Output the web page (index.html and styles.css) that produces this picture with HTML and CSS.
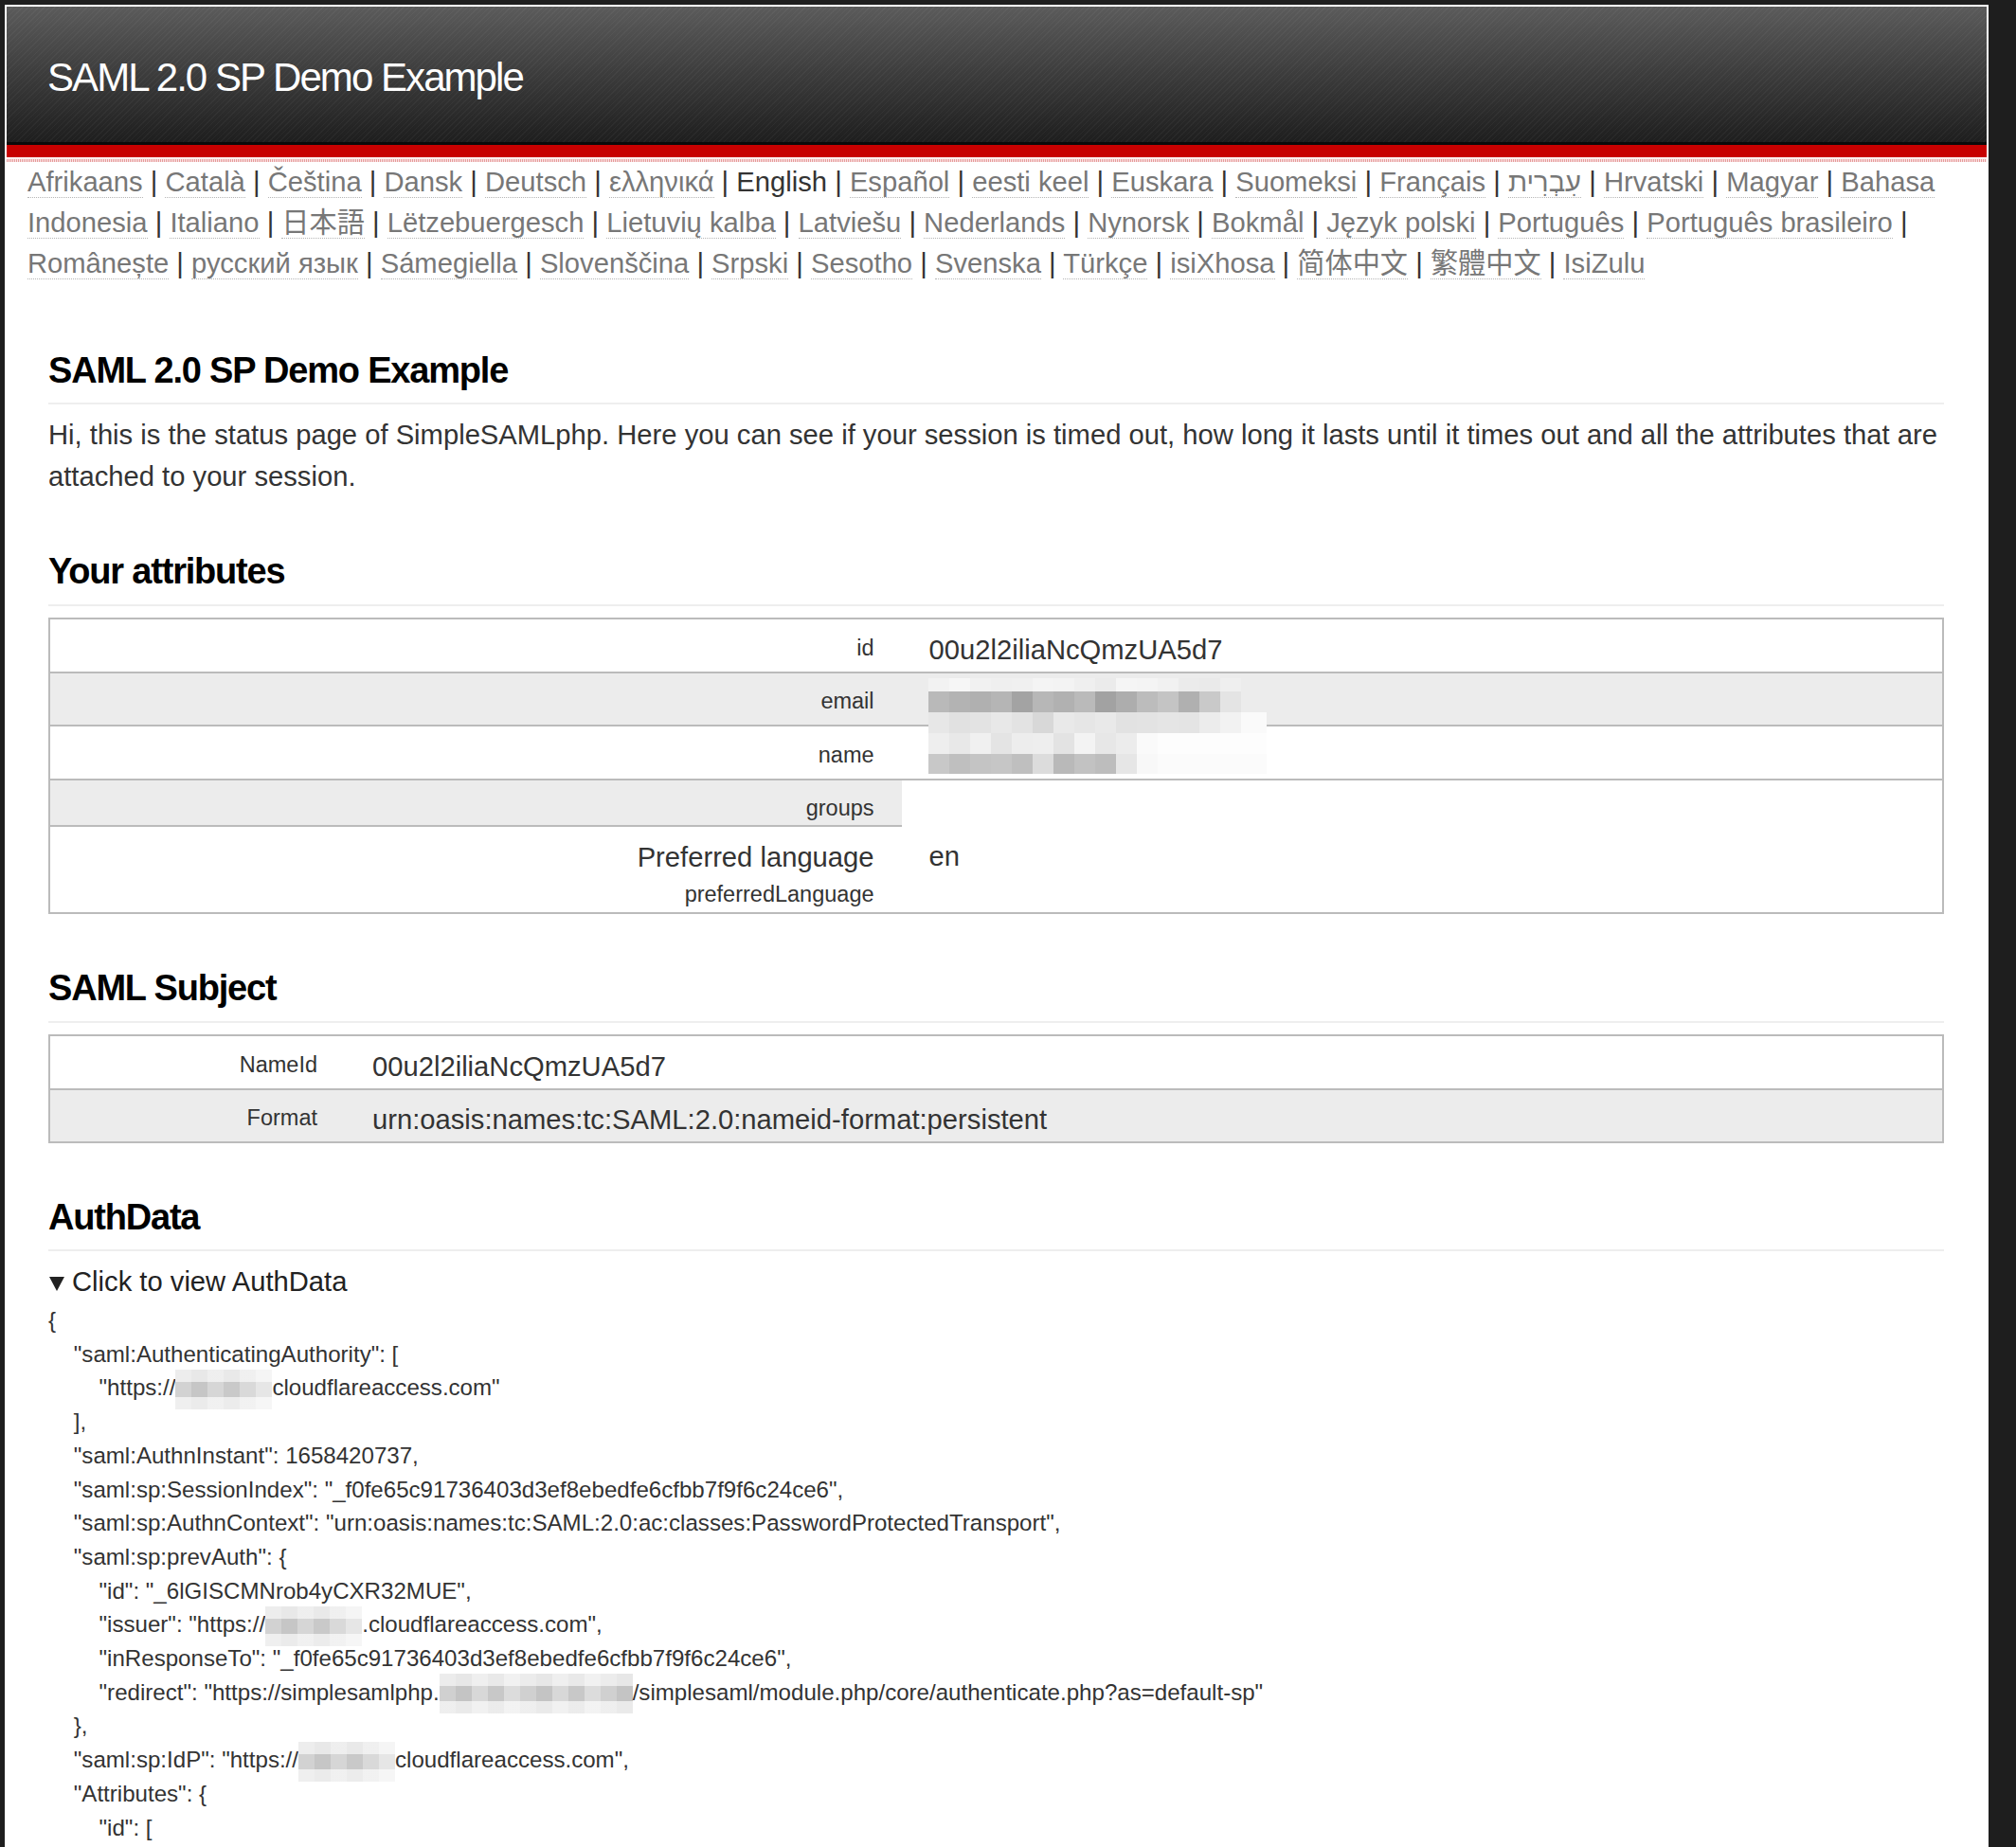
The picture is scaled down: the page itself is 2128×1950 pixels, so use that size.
FILE: index.html
```html
<!DOCTYPE html>
<html lang="en">
<head>
<meta charset="utf-8">
<title>SAML 2.0 SP Demo Example</title>
<link rel="stylesheet" href="styles.css">
</head>
<body>
<div class="wrap">
  <div class="header">
    <div class="header-top"><h1 class="site-title">SAML 2.0 SP Demo Example</h1></div>
    <div class="header-line"></div>
    <div class="header-red"></div>
    <div class="header-dots"></div>
  </div>
  <div class="languagebar"><a href="#">Afrikaans</a> | <a href="#">Català</a> | <a href="#">Čeština</a> | <a href="#">Dansk</a> | <a href="#">Deutsch</a> | <a href="#">ελληνικά</a> | <span class="current">English</span> | <a href="#">Español</a> | <a href="#">eesti keel</a> | <a href="#">Euskara</a> | <a href="#">Suomeksi</a> | <a href="#">Français</a> | <a href="#" lang="he" dir="rtl">עִבְרִית</a> | <a href="#">Hrvatski</a> | <a href="#">Magyar</a> | <a href="#">Bahasa Indonesia</a> | <a href="#">Italiano</a> | <a href="#" lang="ja">日本語</a> | <a href="#">Lëtzebuergesch</a> | <a href="#">Lietuvių kalba</a> | <a href="#">Latviešu</a> | <a href="#">Nederlands</a> | <a href="#">Nynorsk</a> | <a href="#">Bokmål</a> | <a href="#">Język polski</a> | <a href="#">Português</a> | <a href="#">Português brasileiro</a> | <a href="#">Românește</a> | <a href="#">русский язык</a> | <a href="#">Sámegiella</a> | <a href="#">Slovenščina</a> | <a href="#">Srpski</a> | <a href="#">Sesotho</a> | <a href="#">Svenska</a> | <a href="#">Türkçe</a> | <a href="#">isiXhosa</a> | <a href="#" lang="zh-Hans">简体中文</a> | <a href="#" lang="zh-Hant">繁體中文</a> | <a href="#">IsiZulu</a></div>

  <div class="content">
    <h1 class="title">SAML 2.0 SP Demo Example</h1>
    <p class="intro">Hi, this is the status page of SimpleSAMLphp. Here you can see if your session is timed out, how long it lasts until it times out and all the attributes that are attached to your session.</p>

    <h2 class="section">Your attributes</h2>
    <table class="attrs">
      <tr><td class="name">id</td><td class="val">00u2l2iliaNcQmzUA5d7</td></tr>
      <tr class="odd"><td class="name">email</td><td class="val redacted">&nbsp;<div class="mosaic"><div class="mz mz-a"></div><div class="mz mz-b"></div><div class="mz mz-c"></div><div class="mz mz-d"></div><div class="mz mz-e"></div></div></td></tr>
      <tr><td class="name">name</td><td class="val">&nbsp;</td></tr>
      <tr class="odd groups"><td class="name">groups</td><td class="val blank"></td></tr>
      <tr class="last"><td class="name"><span class="big">Preferred language</span><br>preferredLanguage</td><td class="val">en</td></tr>
    </table>

    <h2 class="section">SAML Subject</h2>
    <table class="attrs subject">
      <tr><td class="name">NameId</td><td class="val">00u2l2iliaNcQmzUA5d7</td></tr>
      <tr class="odd"><td class="name">Format</td><td class="val">urn:oasis:names:tc:SAML:2.0:nameid-format:persistent</td></tr>
    </table>

    <h2 class="section">AuthData</h2>
    <details class="authdata" open>
      <summary>Click to view AuthData</summary>
<pre class="json">{
    "saml:AuthenticatingAuthority": [
        "https://<span class="jblur"></span>cloudflareaccess.com"
    ],
    "saml:AuthnInstant": 1658420737,
    "saml:sp:SessionIndex": "_f0fe65c91736403d3ef8ebedfe6cfbb7f9f6c24ce6",
    "saml:sp:AuthnContext": "urn:oasis:names:tc:SAML:2.0:ac:classes:PasswordProtectedTransport",
    "saml:sp:prevAuth": {
        "id": "_6lGISCMNrob4yCXR32MUE",
        "issuer": "https://<span class="jblur"></span>.cloudflareaccess.com",
        "inResponseTo": "_f0fe65c91736403d3ef8ebedfe6cfbb7f9f6c24ce6",
        "redirect": "https://simplesamlphp.<span class="jblur wide"></span>/simplesaml/module.php/core/authenticate.php?as=default-sp"
    },
    "saml:sp:IdP": "https://<span class="jblur"></span>cloudflareaccess.com",
    "Attributes": {
        "id": [
            "00u2l2iliaNcQmzUA5d7"
        ],
        "email": [
            ""
        ]
    }
}</pre>
    </details>
  </div>
</div>
</body>
</html>
```
FILE: styles.css
```css
* { box-sizing: border-box; }
html, body { margin: 0; padding: 0; }
body {
  background: #1e1e1e;
  font-family: "Liberation Sans", Arial, Helvetica, "Noto Sans CJK SC", sans-serif;
  color: #333;
}
.wrap {
  margin: 5px 29px 0 5px;
  padding: 2px 2px 0;
  background: #fff;
  min-height: 1945px;
}

/* header */
.header-top {
  height: 143px;
  padding: 51px 0 0 43px;
  background:
    repeating-linear-gradient(135deg, rgba(255,255,255,0.035) 0 1px, rgba(255,255,255,0) 1px 4px),
    linear-gradient(180deg, #5b5b5b 0%, #3c3c3c 50%, #1e1e1e 100%);
}
.site-title {
  margin: 0;
  font-size: 42px;
  line-height: 48px;
  font-weight: normal;
  letter-spacing: -1.95px;
  color: #fff;
}
.header-line { height: 3px; background: #0a0a0a; }
.header-red { height: 13px; background: #c70000; }
.header-dots {
  height: 5px;
  background:
    linear-gradient(#fcefef, #fcefef) top left / 100% 2px no-repeat,
    repeating-linear-gradient(90deg, #e59a9a 0 1px, #fbe6e6 1px 2px);
}

/* language bar */
.languagebar {
  padding: 0 22px;
  font-size: 29.2px;
  line-height: 43px;
  color: #333;
}
.languagebar a {
  color: #777;
  text-decoration: none;
  border-bottom: 1px dotted #b5b5b5;
}
.languagebar .current { color: #333; }
.languagebar :lang(ja) { font-family: "Liberation Sans", "Noto Sans CJK JP", sans-serif; }
.languagebar :lang(zh-Hans) { font-family: "Liberation Sans", "Noto Sans CJK SC", sans-serif; }
.languagebar :lang(zh-Hant) { font-family: "Liberation Sans", "Noto Sans CJK TC", sans-serif; }

/* content */
.content { padding: 0 45px 40px 44px; }
.title, .section {
  margin: 0;
  font-size: 38px;
  line-height: 44px;
  font-weight: bold;
  letter-spacing: -1.2px;
  color: #000;
  padding-bottom: 12.3px;
  border-bottom: 2px solid #eee;
}
.title { margin-top: 69px; }
.section { margin-top: 56px; }
.intro {
  margin: 10px 0 0;
  font-size: 29.2px;
  line-height: 44px;
  color: #333;
}

/* tables */
.attrs {
  width: 100%;
  margin-top: 12.5px;
  border-collapse: collapse;
  border: 2px solid #bbb;
  font-size: 29.2px;
  line-height: 1.49;
  color: #333;
}
.attrs td {
  padding: 10.5px 29px 0.5px;
  vertical-align: top;
  border-top: 2px solid #bbb;
}
.attrs td.name {
  width: 45%;
  text-align: right;
  font-size: 23.5px;
  padding-top: 12.8px;
  padding-bottom: 0;
}
.attrs td.name .big { font-size: 29.2px; }
.attrs tr.odd td { background: #ececec; }
.attrs tr.odd td.blank { background: #fff; }
.attrs tr.last td.name { padding-top: 10.5px; padding-bottom: 1px; }
.attrs tr.last td.val { border-top: none; }
.subject td.name { width: 312px; }

.redacted { position: relative; }
.mosaic {
  position: absolute;
  left: 28px;
  top: 5px;
  width: 357px;
}
.mz { width: 100%; }
.mz-a {
  height: 14px;
  background: linear-gradient(90deg, #f2f2f2 0 22px, #f6f6f6 22px 44px, #f1f1f1 44px 66px, #efefef 66px 88px, #f0f0f0 88px 110px, #f4f4f4 110px 132px, #f3f3f3 132px 154px, #efefef 154px 176px, #ebebeb 176px 198px, #f5f5f5 198px 220px, #f4f4f4 220px 242px, #f1f1f1 242px 264px, #ebebeb 264px 286px, #eaeaea 286px 308px, #efefef 308px 330px, #ececec 330px 357px);
}
.mz-b {
  height: 22px;
  background: linear-gradient(90deg, #b9b9b9 0 22px, #b3b3b3 22px 44px, #b0b0b0 44px 66px, #b5b5b5 66px 88px, #a3a3a3 88px 110px, #b7b7b7 110px 132px, #b1b1b1 132px 154px, #bababa 154px 176px, #a2a2a2 176px 198px, #adadad 198px 220px, #bcbcbc 220px 242px, #c4c4c4 242px 264px, #b0b0b0 264px 286px, #c9c9c9 286px 308px, #e4e4e4 308px 330px, #ececec 330px 357px);
}
.mz-c {
  height: 22px;
  background: linear-gradient(90deg, #e7e7e7 0 22px, #e1e1e1 22px 44px, #e3e3e3 44px 66px, #e8e8e8 66px 88px, #e3e3e3 88px 110px, #d8d8d8 110px 132px, #e9e9e9 132px 154px, #e6e6e6 154px 176px, #e9e9e9 176px 198px, #e2e2e2 198px 220px, #e3e3e3 220px 242px, #e5e5e5 242px 264px, #e4e4e4 264px 286px, #ececec 286px 308px, #f2f2f2 308px 330px, #fafafa 330px 357px);
}
.mz-d {
  height: 22px;
  background: linear-gradient(90deg, #eeeeee 0 22px, #e8e8e8 22px 44px, #f0f0f0 44px 66px, #e4e4e4 66px 88px, #ededed 88px 110px, #eeeeee 110px 132px, #e3e3e3 132px 154px, #f3f3f3 154px 176px, #e7e7e7 176px 198px, #ececec 198px 220px, #fafafa 220px 242px, #fdfdfd 242px 357px);
}
.mz-e {
  height: 21px;
  background: linear-gradient(90deg, #c8c8c8 0 22px, #bfbfbf 22px 44px, #c4c4c4 44px 66px, #c6c6c6 66px 88px, #bfbfbf 88px 110px, #dcdcdc 110px 132px, #b9b9b9 132px 154px, #c2c2c2 154px 176px, #bdbdbd 176px 198px, #e6e6e6 198px 220px, #f8f8f8 220px 242px, #fbfbfb 242px 357px);
}

/* authdata */
.authdata { margin-top: 10.5px; }
.authdata summary {
  display: block;
  list-style: none;
  font-size: 29.2px;
  line-height: 43.5px;
  color: #222;
  cursor: pointer;
}
.authdata summary::-webkit-details-marker { display: none; }
.authdata summary::before {
  content: "";
  display: inline-block;
  border-left: 8px solid transparent;
  border-right: 8px solid transparent;
  border-top: 15px solid #222;
  margin: 0 8px 0 1px;
}
.json {
  margin: 0.5px 0 0;
  font-family: "Liberation Sans", Arial, Helvetica, sans-serif;
  font-size: 24.1px;
  line-height: 35.7px;
  color: #333;
  white-space: pre;
}
.jblur {
  display: inline-block;
  width: 102px;
  height: 42px;
  margin: -7px 0;
  vertical-align: middle;
  background:
    linear-gradient(180deg, rgba(255,255,255,0.6) 0 13px, rgba(255,255,255,0) 13px 29px, rgba(255,255,255,0.65) 29px 42px),
    linear-gradient(90deg, #d2d2d2 0 17px, #c6c6c6 17px 34px, #d6d6d6 34px 51px, #c9c9c9 51px 68px, #d9d9d9 68px 85px, #e6e6e6 85px 102px);
}
.jblur.wide {
  width: 204px;
  background:
    linear-gradient(180deg, rgba(255,255,255,0.6) 0 13px, rgba(255,255,255,0) 13px 29px, rgba(255,255,255,0.65) 29px 42px),
    repeating-linear-gradient(90deg, #d0d0d0 0 17px, #c4c4c4 17px 34px, #d8d8d8 34px 51px, #c8c8c8 51px 68px, #dcdcdc 68px 85px);
}
```
